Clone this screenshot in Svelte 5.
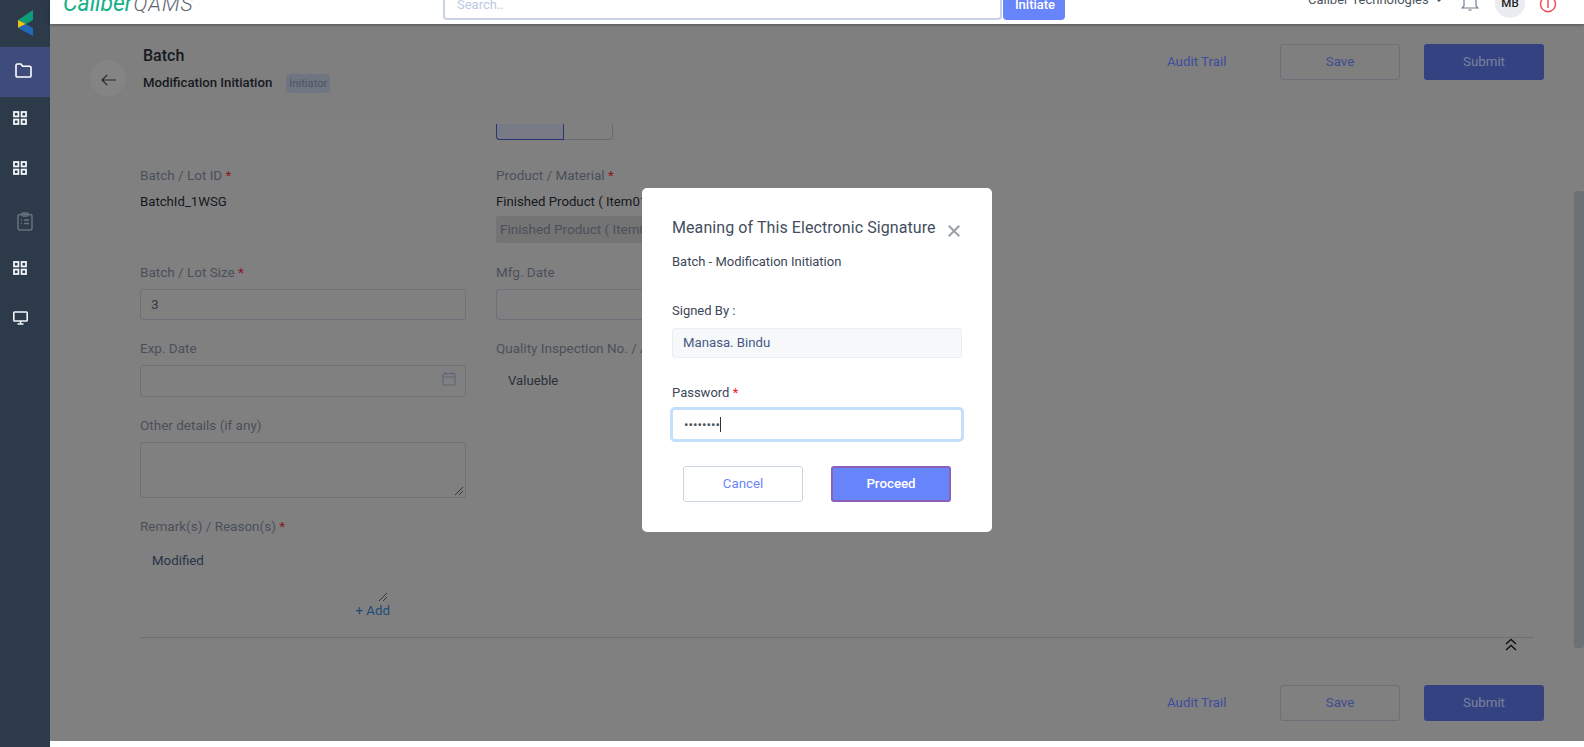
<script lang="ts">
	const navItems = ['grid', 'grid', 'clipboard', 'grid', 'monitor'];
	const footerActions = ['Audit Trail', 'Save', 'Submit'];
	let password = '••••••••';
</script>

{#snippet actions()}
	<div class="actions">
		<button class="link-btn">{footerActions[0]}</button>
		<button class="outline-btn">{footerActions[1]}</button>
		<button class="solid-btn">{footerActions[2]}</button>
	</div>
{/snippet}

<div class="shell">
	<aside class="sidebar">
		<div class="logo-wrap">
			<svg width="15" height="26" viewBox="0 0 15 26">
				<polygon points="0,10 15,0 15,10 8,14" fill="#0e9d78" />
				<polygon points="0,10 8,14 0,18" fill="#f1c40f" />
				<polygon points="0,18 8,14 15,18 15,26" fill="#2467b3" />
			</svg>
		</div>
		<div class="nav-item active">
			<svg width="17" height="15" viewBox="0 0 18 16" fill="none" stroke="#fff" stroke-width="1.7">
				<path d="M1 2.5A1.5 1.5 0 0 1 2.5 1h3.8l1.8 2.4h7.4A1.5 1.5 0 0 1 17 4.9v8.6a1.5 1.5 0 0 1-1.5 1.5h-13A1.5 1.5 0 0 1 1 13.5z" />
			</svg>
		</div>
		{#each navItems as item}
			<div class="nav-item" class:tight={item !== 'clipboard'} class:clip={item === 'clipboard'}>
				{#if item === 'grid'}
					<svg width="14" height="14" viewBox="0 0 14 14" fill="none" stroke="#f2f6fa" stroke-width="1.8">
						<rect x="1" y="1" width="4.4" height="4.4" />
						<rect x="8.6" y="1" width="4.4" height="4.4" />
						<rect x="1" y="8.6" width="4.4" height="4.4" />
						<rect x="8.6" y="8.6" width="4.4" height="4.4" />
					</svg>
				{:else if item === 'clipboard'}
					<svg width="16" height="19" viewBox="0 0 16 19" fill="none" stroke="#65717f" stroke-width="1.5">
						<rect x="1" y="2.5" width="14" height="15.5" rx="2" />
						<rect x="5" y="1" width="6" height="3" rx="1" />
						<path d="M4 8h1M7 8h5M4 11.5h1M7 11.5h5" />
					</svg>
				{:else}
					<svg width="15" height="14" viewBox="0 0 15 14" fill="none" stroke="#f2f6fa" stroke-width="1.6">
						<rect x="0.8" y="1" width="13.4" height="9" rx="0.8" />
						<path d="M7.5 10v3M4.5 13h6" />
					</svg>
				{/if}
			</div>
		{/each}
	</aside>

	<div class="main">
		<header class="topbar">
			<div class="brand"><span class="brand-a">Caliber</span><span class="brand-b">QAMS</span></div>
			<div class="search">
				<div class="search-box">Search..</div>
				<button class="initiate">Initiate</button>
			</div>
			<div class="top-right">
				<span class="company">Caliber Technologies</span>
				<span class="caret"></span>
				<svg class="bell" width="18" height="22" viewBox="0 0 18 22" fill="none" stroke="#74808f" stroke-width="1.2">
					<path d="M3 16V8a6 6 0 0 1 12 0v8l2 2H1z" />
					<path d="M7.5 20h3" />
				</svg>
				<span class="avatar">MB</span>
				<svg class="power" width="18" height="22" viewBox="0 0 18 22" fill="none" stroke="#f0505c" stroke-width="1.5">
					<path d="M5.5 5.5a7.5 7.5 0 1 0 7 0" />
					<path d="M9 1v15" />
				</svg>
			</div>
		</header>

		<div class="page">
			<div class="page-head">
				<div class="back">
					<svg width="15" height="12" viewBox="0 0 15 12" fill="none" stroke="#222a33" stroke-width="1.2">
						<path d="M15 6H1M6.2 .8 1 6l5.2 5.2" />
					</svg>
				</div>
				<div class="titles">
					<div class="title">Batch</div>
					<div class="subtitle"><span>Modification Initiation</span><span class="role">Initiator</span></div>
				</div>
				{@render actions()}
			</div>

			<div class="form">
				<div class="tabs-stub"><span class="on"></span><span></span></div>

				<div class="row row-first">
					<div class="field">
						<div class="lbl">Batch / Lot ID <i>*</i></div>
						<div class="val">BatchId_1WSG</div>
					</div>
					<div class="field">
						<div class="lbl">Product / Material <i>*</i></div>
						<div class="val">Finished Product ( Item01 )</div>
						<div class="disabled">Finished Product ( Item01 )</div>
					</div>
				</div>

				<div class="row row-size">
					<div class="field">
						<div class="lbl">Batch / Lot Size <i>*</i></div>
						<div class="input">3</div>
					</div>
					<div class="field">
						<div class="lbl">Mfg. Date</div>
						<div class="input"></div>
					</div>
				</div>

				<div class="row row-exp">
					<div class="field">
						<div class="lbl">Exp. Date</div>
						<div class="input date">
							<svg width="14" height="15" viewBox="0 0 14 15" fill="none" stroke="#596677" stroke-width="1.1">
								<rect x="1" y="2.5" width="12" height="11.5" rx="1.5" />
								<path d="M1 6h12M4 1v3M10 1v3" />
							</svg>
						</div>
					</div>
					<div class="field">
						<div class="lbl">Quality Inspection No. / AR No.</div>
						<div class="val plain">Valueble</div>
					</div>
				</div>

				<div class="row row-other">
					<div class="field">
						<div class="lbl">Other details (if any)</div>
						<div class="input area">
							<svg class="grip" width="10" height="10" viewBox="0 0 10 10" stroke="#222" stroke-width="0.8">
								<path d="M1 9 9 1M5 9 9 5" />
							</svg>
						</div>
					</div>
				</div>

				<div class="row row-remark">
					<div class="field">
						<div class="lbl">Remark(s) / Reason(s) <i>*</i></div>
						<div class="remark">
							Modified
							<svg class="grip" width="10" height="10" viewBox="0 0 10 10" stroke="#222" stroke-width="0.8">
								<path d="M1 9 9 1M5 9 9 5" />
							</svg>
						</div>
						<div class="add">+ Add</div>
					</div>
				</div>

				<div class="divider"></div>
				<svg class="collapse" width="12" height="13" viewBox="0 0 12 13" fill="none" stroke="#111" stroke-width="1.4">
					<path d="M1 6l5-4.5L11 6M1 12l5-4.5 5 4.5" />
				</svg>
			</div>

			<div class="page-foot">{@render actions()}</div>
		</div>

		<div class="scrollbar"><div class="thumb"></div></div>
		<div class="bottom-strip"></div>
	</div>
</div>

<div class="modal" role="dialog">
	<div class="modal-head">
		<h2>Meaning of This Electronic Signature</h2>
		<svg width="12" height="12" viewBox="0 0 12 12" stroke="#9aa0a8" stroke-width="2">
			<path d="M.7 .7l10.6 10.6M11.3 .7 .7 11.3" />
		</svg>
	</div>
	<div class="modal-sub">Batch - Modification Initiation</div>
	<label class="m-label" for="signed">Signed By :</label>
	<div class="signed" id="signed">Manasa. Bindu</div>
	<label class="m-label pw" for="pw">Password <i>*</i></label>
	<div class="pw-input" id="pw"><span class="dots">{password}</span><span class="cursor"></span></div>
	<div class="modal-btns">
		<button class="cancel">Cancel</button>
		<button class="proceed">Proceed</button>
	</div>
</div>

<style>
	:global(body) {
		margin: 0;
		font-family: Roboto, 'Liberation Sans', sans-serif;
		overflow: hidden;
	}

	button {
		font-family: inherit;
		cursor: pointer;
	}

	.shell {
		display: flex;
		height: 747px;
		width: 1584px;
		overflow: hidden;
	}

	.sidebar {
		width: 50px;
		flex: none;
		background: #2c3a49;
		display: flex;
		flex-direction: column;
	}

	.logo-wrap {
		height: 47px;
		padding-top: 10px;
		box-sizing: border-box;
		padding-left: 18px;
	}

	.nav-item {
		height: 50px;
		display: flex;
		align-items: center;
		justify-content: center;
		box-sizing: border-box;
	}

	.nav-item.tight {
		padding: 0 10px 8px 0;
	}

	.nav-item.clip {
		padding-bottom: 1px;
	}

	.nav-item.active {
		background: #3d4c7c;
		padding: 0 3px 3px 0;
	}

	.main {
		flex: 1;
		display: flex;
		flex-direction: column;
		position: relative;
		min-width: 0;
	}

	.topbar {
		height: 24px;
		flex: none;
		background: #fff;
		box-shadow: 0 1px 3px rgba(0, 0, 0, 0.35);
		display: flex;
		position: relative;
		z-index: 2;
		overflow: hidden;
	}

	.brand {
		margin: -15px 0 0 13px;
		height: 37px;
		line-height: 37px;
		font-size: 23px;
		width: 380px;
		flex: none;
	}

	.brand-a {
		color: #12b08a;
		font-style: italic;
	}

	.brand-b {
		color: #5d6670;
		font-weight: 300;
		font-style: italic;
		font-size: 21px;
		letter-spacing: 1px;
		margin-left: 1px;
	}

	.search {
		display: flex;
		margin-top: -16px;
		height: 36px;
		gap: 1px;
	}

	.search-box {
		width: 559px;
		box-sizing: border-box;
		height: 36px;
		border: 2px solid #c9d3e2;
		border-top: 0;
		border-radius: 4px;
		background: #fff;
		color: #bccae3;
		font-size: 13px;
		padding: 13px 0 0 12px;
	}

	.initiate {
		width: 62px;
		height: 36px;
		border: 0;
		border-radius: 4px;
		background: #6884fb;
		color: #fff;
		font-size: 13px;
		padding: 4px 0 0 2px;
		font-weight: 500;
	}

	.top-right {
		margin-left: auto;
		display: flex;
		align-items: flex-start;
		position: relative;
		width: 300px;
		height: 24px;
	}

	.company {
		position: absolute;
		left: 24px;
		top: -8px;
		font-size: 13px;
		color: #4a5560;
		white-space: nowrap;
	}

	.caret {
		position: absolute;
		left: 152px;
		top: -1px;
		border: 3px solid transparent;
		border-top-color: #4a5560;
	}

	.bell {
		position: absolute;
		left: 177px;
		top: -10px;
	}

	.avatar {
		position: absolute;
		left: 211px;
		top: -12px;
		width: 30px;
		height: 30px;
		border-radius: 50%;
		background: #e9edf1;
		font-size: 11.5px;
		font-weight: 500;
		color: #222;
		display: flex;
		align-items: center;
		justify-content: center;
		box-sizing: border-box;
	}

	.power {
		position: absolute;
		left: 255px;
		top: -8px;
	}

	.page {
		flex: 1;
		background: #808080;
		display: flex;
		flex-direction: column;
		min-height: 0;
	}

	.page-head {
		height: 100px;
		flex: none;
		background: #7f7f7f;
		display: flex;
		align-items: flex-start;
		padding-left: 40px;
		box-sizing: border-box;
	}

	.back {
		width: 36px;
		height: 36px;
		border-radius: 50%;
		background: #848484;
		margin-top: 36px;
		padding-top: 4px;
		box-sizing: border-box;
		display: flex;
		align-items: center;
		justify-content: center;
		flex: none;
	}

	.titles {
		margin: 0 0 0 17px;
		padding-top: 22px;
		flex: 1;
	}

	.title {
		font-size: 16px;
		font-weight: 500;
		color: #15191e;
		line-height: 20px;
	}

	.subtitle {
		font-size: 13.2px;
		font-weight: 500;
		color: #15191e;
		line-height: 20px;
		margin-top: 7px;
		display: flex;
		align-items: center;
		white-space: nowrap;
	}

	.role {
		background: #6f7581;
		color: #4c5562;
		font-size: 11.2px;
		font-weight: 400;
		padding: 0 3px;
		border-radius: 4px;
		height: 19px;
		line-height: 19px;
		margin-left: 14px;
	}

	.actions {
		display: flex;
		align-items: center;
		margin-left: auto;
		padding-right: 40px;
	}

	.page-head .actions {
		margin-top: 20px;
	}

	.link-btn {
		background: none;
		border: 0;
		padding: 0 0 2px;
		width: 59px;
		color: #3f4c9c;
		font-size: 13.3px;
		margin-right: 54px;
		white-space: nowrap;
	}

	.outline-btn {
		width: 120px;
		height: 36px;
		border: 1px solid #6b7079;
		border-radius: 3px;
		background: none;
		color: #3f4c8f;
		font-size: 13.3px;
		margin-right: 24px;
		padding: 0 0 2px;
	}

	.solid-btn {
		width: 120px;
		height: 36px;
		border: 0;
		border-radius: 3px;
		background: #344282;
		color: #7b829c;
		font-size: 13.3px;
		padding: 0 0 2px;
	}

	.form {
		flex: 1;
		position: relative;
		padding: 0 64px 0 90px;
		box-sizing: border-box;
		min-height: 0;
	}

	.tabs-stub {
		position: absolute;
		left: 446px;
		top: 0;
		width: 117px;
		height: 16px;
		display: flex;
		box-sizing: border-box;
		border: 1px solid #666c74;
		border-top: 0;
		border-radius: 0 0 4px 4px;
	}

	.tabs-stub span {
		flex: 1;
	}

	.tabs-stub .on {
		flex: none;
		width: 66px;
		background: #787b86;
		border: 1px solid #2a3672;
		border-top: 0;
		border-radius: 0 0 0 4px;
		margin: 0 0 -1px -1px;
	}

	.row {
		display: grid;
		grid-template-columns: 326px 1fr;
		gap: 30px;
		line-height: 16px;
	}

	.row-first {
		padding-top: 44px;
		height: 141px;
		box-sizing: border-box;
	}

	.row-size {
		height: 76px;
	}

	.row-exp {
		height: 77px;
	}

	.row-other {
		height: 101px;
	}

	.lbl {
		font-size: 13.5px;
		color: #4a505a;
		line-height: 16px;
		white-space: nowrap;
		margin-top: -1px;
	}

	.lbl i,
	.m-label i {
		font-style: normal;
		color: #8a1620;
	}

	.val {
		font-size: 13.2px;
		color: #15191e;
		margin-top: 11px;
		line-height: 16px;
		white-space: nowrap;
	}

	.val.plain {
		color: #2a3038;
		padding-left: 12px;
		margin-top: 17px;
	}

	.disabled {
		margin-top: 6px;
		width: 326px;
		height: 27px;
		line-height: 27px;
		padding-left: 4px;
		box-sizing: border-box;
		font-size: 13.5px;
		color: #4a505a;
		background: #747474;
		border-radius: 3px;
		white-space: nowrap;
	}

	.input {
		margin-top: 9px;
		height: 31px;
		width: 326px;
		box-sizing: border-box;
		border: 1px solid #6b7079;
		border-radius: 3px;
		font-size: 13.5px;
		color: #333a44;
		line-height: 29px;
		padding-left: 10px;
		position: relative;
	}

	.input.date {
		height: 32px;
	}

	.date svg {
		position: absolute;
		right: 9px;
		top: 5px;
	}

	.input.area {
		height: 56px;
	}

	.grip {
		position: absolute;
		right: 1px;
		bottom: 1px;
	}

	.remark {
		position: relative;
		width: 249px;
		height: 55px;
		margin-top: 14px;
		padding: 3px 0 0 12px;
		font-size: 13.3px;
		line-height: 20px;
		color: #26344a;
		box-sizing: border-box;
	}

	.add {
		font-size: 13.3px;
		line-height: 16px;
		color: #1e4a78;
		text-align: right;
		width: 250px;
	}

	.divider {
		position: absolute;
		left: 90px;
		right: 50px;
		top: 513px;
		height: 1px;
		background: #6c6f73;
	}

	.collapse {
		position: absolute;
		right: 67px;
		top: 514px;
	}

	.page-foot {
		position: absolute;
		right: 0;
		left: 0;
		top: 685px;
		display: flex;
	}

	.scrollbar {
		position: absolute;
		right: 0;
		top: 124px;
		bottom: 6px;
		width: 10px;
	}

	.thumb {
		position: absolute;
		left: 0;
		right: 0;
		top: 67px;
		height: 457px;
		background: #6c7175;
		border-radius: 3px;
	}

	.bottom-strip {
		height: 6px;
		flex: none;
		background: #fff;
	}

	.modal {
		position: absolute;
		left: 642px;
		top: 188px;
		width: 350px;
		height: 344px;
		background: #fff;
		border-radius: 5px;
		padding: 30px 30px 0;
		box-sizing: border-box;
		z-index: 5;
		color: #3c4757;
	}

	.modal-head {
		display: flex;
		justify-content: space-between;
		align-items: center;
	}

	.modal-head h2 {
		margin: 0;
		font-size: 16px;
		font-weight: 400;
		letter-spacing: 0.08px;
		line-height: 20px;
		color: #434e5e;
		white-space: nowrap;
	}

	.modal-head svg {
		margin-top: 6px;
		margin-right: 2px;
		flex: none;
	}

	.modal-sub {
		font-size: 13px;
		margin-top: 16px;
		line-height: 16px;
	}

	.m-label {
		display: block;
		font-size: 13px;
		line-height: 16px;
		margin-top: 33px;
	}

	.m-label.pw {
		margin-top: 27px;
	}

	.m-label i {
		color: #f0202c;
	}

	.signed {
		margin-top: 9px;
		height: 30px;
		border: 1px solid #ebeef2;
		border-radius: 3px;
		background: #f6f8fa;
		box-sizing: border-box;
		font-size: 13.2px;
		line-height: 28px;
		padding-left: 10px;
		color: #465a82;
	}

	.pw-input {
		margin-top: 6px;
		margin-left: -2px;
		margin-right: -2px;
		height: 35px;
		border: 3px solid #c3dffb;
		border-radius: 5px;
		box-sizing: border-box;
		background: #fff;
		display: flex;
		align-items: center;
		padding-left: 11px;
	}

	.dots {
		font-size: 13.3px;
		color: #4a5560;
		line-height: 1;
	}

	.cursor {
		width: 1px;
		height: 15px;
		background: #2a3340;
	}

	.modal-btns {
		display: flex;
		justify-content: space-between;
		margin: 24px 11px 0;
	}

	.modal-btns button {
		width: 120px;
		height: 36px;
		border-radius: 3px;
		font-size: 13.3px;
		padding: 0 0 2px;
	}

	.cancel {
		background: #fff;
		border: 1px solid #c9d6e6;
		color: #6c86fa;
	}

	.proceed {
		background: #6884fb;
		border: 2px solid #8a60b8;
		color: #fff;
		font-weight: 500;
	}
</style>
